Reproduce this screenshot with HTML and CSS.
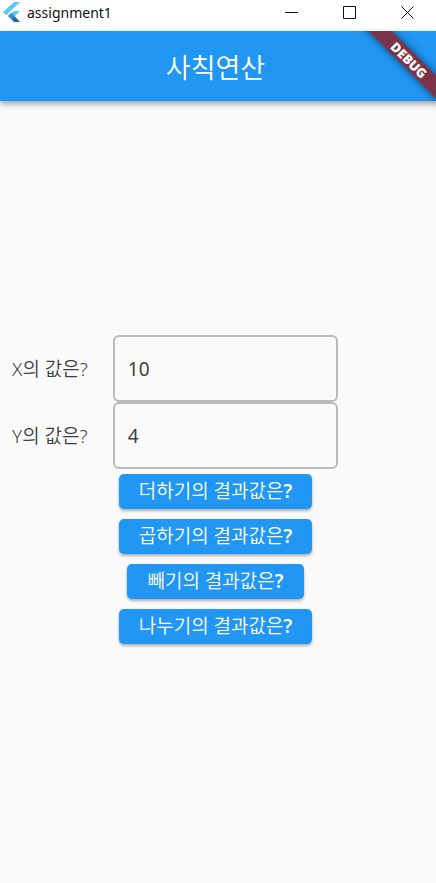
FILE: index.html
```html
<!DOCTYPE html>
<html lang="ko">
<head>
<meta charset="utf-8">
<meta name="viewport" content="width=device-width, initial-scale=1">
<title>assignment1</title>
<link rel="stylesheet" href="styles.css">
</head>
<body>
<div class="titlebar">
  <svg class="logo" viewBox="0 0 18 20" aria-hidden="true">
    <path fill="#5cc8f8" d="M11 0h6L3.300 13.200 0 10z"/>
    <path fill="#5cc8f8" d="M11 9h6l-5 5-3 3-4-3z"/>
    <path fill="#2b8fd0" d="M5 14l3-3 4 3.500-3.500 3z"/>
    <path fill="#1f68ae" d="M8.500 17.500l3.500-3 5 5.500h-6z"/>
  </svg>
  <span class="window-name">assignment1</span>
  <div class="window-controls">
    <button type="button" class="window-button" aria-label="최소화"><svg viewBox="0 0 13 13"><path d="M0 6.500h13"/></svg></button>
    <button type="button" class="window-button" aria-label="최대화"><svg viewBox="0 0 13 13"><path d="M.5.5h12v12H.5z"/></svg></button>
    <button type="button" class="window-button" aria-label="닫기"><svg viewBox="0 0 13 13"><path d="M.5.5l12 12m0-12l-12 12"/></svg></button>
  </div>
</div>
<header class="appbar">
  <h1>사칙연산</h1>
  <div class="banner-clip"><span class="banner">DEBUG</span></div>
</header>
<main>
  <div class="field"><label for="x">X의 값은?</label><input id="x" type="text" inputmode="numeric" value="10"></div>
  <div class="field"><label for="y">Y의 값은?</label><input id="y" type="text" inputmode="numeric" value="4"></div>
  <div class="actions">
    <button type="button" class="action">더하기의 결과값은<b>?</b></button>
    <button type="button" class="action">곱하기의 결과값은<b>?</b></button>
    <button type="button" class="action">빼기의 결과값은<b>?</b></button>
    <button type="button" class="action">나누기의 결과값은<b>?</b></button>
  </div>
</main>
</body>
</html>
```
FILE: styles.css
```css
* { box-sizing: border-box; }

body {
  margin: 0;
  min-height: 100vh;
  display: flex;
  flex-direction: column;
  background: #fafafa;
  color: #404040;
  font-family: "Noto Sans", "Noto Sans CJK KR", sans-serif;
  font-size: 19px;
}

button, input { font: inherit; }

.titlebar {
  display: flex;
  align-items: flex-start;
  height: 31px;
  padding-left: 3px;
  background: #fff;
  color: #111;
}

.logo {
  width: 18px;
  height: 20px;
  margin-top: 2px;
}

.window-name {
  margin-left: 6px;
  font-size: 14px;
  line-height: 26px;
}

.window-controls {
  display: flex;
  margin-left: auto;
}

.window-button {
  display: flex;
  align-items: center;
  justify-content: center;
  width: 58px;
  height: 25px;
  padding: 0;
  border: 0;
  background: none;
}

.window-button svg {
  width: 13px;
  height: 13px;
  fill: none;
  stroke: #111;
}

.appbar {
  position: relative;
  display: flex;
  align-items: center;
  justify-content: center;
  height: 70px;
  padding: 4px 5px 0 0;
  background: #2196f3;
  color: #fff;
  box-shadow: 0 3px 6px rgba(0, 0, 0, .35);
}

h1 {
  margin: 0;
  font-size: 27px;
  font-weight: 350;
  line-height: 40px;
}

.banner-clip {
  position: absolute;
  top: 0;
  right: 0;
  width: 90px;
  height: 80px;
  overflow: hidden;
}

.banner {
  position: absolute;
  top: 21px;
  right: -33px;
  width: 120px;
  background: #7b3447;
  box-shadow: 0 0 8px rgba(0, 0, 0, .6);
  font-size: 13px;
  font-weight: 900;
  line-height: 16px;
  text-align: center;
  transform: rotate(45deg);
}

main {
  flex: 1;
  display: flex;
  flex-direction: column;
  justify-content: center;
  padding: 0 5px 0 12px;
}

.field {
  display: flex;
  align-items: center;
  gap: 25px;
}

.field label {
  font-weight: 350;
  line-height: 28px;
}

.field input {
  width: 225px;
  height: 67px;
  padding: 0 13px;
  border: 2px solid #bababa;
  border-radius: 6px;
  background: transparent;
  color: #404040;
}

.actions {
  display: flex;
  flex-direction: column;
  align-items: center;
  gap: 10px;
  margin-left: -12px;
  padding: 5px 0;
}

.action {
  height: 35px;
  padding: 0 20px;
  border: 0;
  border-radius: 5px;
  background: #2196f3;
  color: #fff;
  font-weight: 350;
  line-height: 35px;
  box-shadow: 0 2px 3px rgba(0, 0, 0, .3);
}

.action b { font-weight: 600; }
```
